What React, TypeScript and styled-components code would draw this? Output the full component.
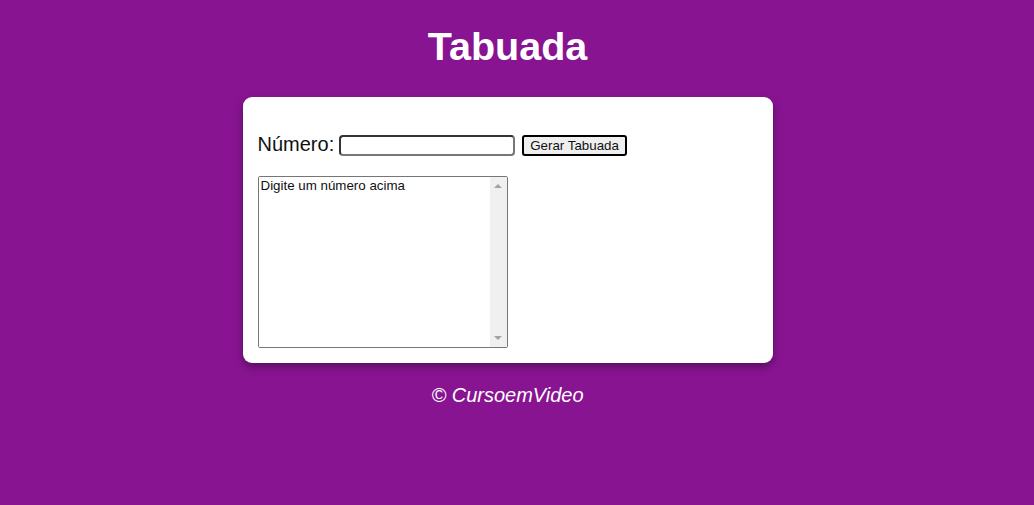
import React, { useState } from 'react';
import styled, { createGlobalStyle } from 'styled-components';

const GlobalStyle = createGlobalStyle`
  html, body {
    margin: 0;
    padding: 0;
    background: #881491;
    font-family: 'Liberation Sans', Arial, sans-serif;
  }
`;

// the reference was shot with a scrollbar gutter, so the centre sits left
const Page = styled.div`
  width: calc(100% - 19px);
  display: flex;
  flex-direction: column;
  align-items: center;
`;

const Title = styled.h1`
  margin: 24px 0 29px;
  font-size: 39.5px;
  line-height: 44px;
  font-weight: bold;
  color: #fff;
`;

const Card = styled.section`
  box-sizing: border-box;
  width: 530px;
  padding: 15px;
  background: #fff;
  border-radius: 9px;
  box-shadow: 0 4px 8px rgba(0, 0, 0, 0.35);
`;

const Row = styled.p`
  margin: 20px 0;
  font-size: 20px;
  line-height: 23px;
  color: #111;
  display: flex;
  align-items: center;
`;

const NumberInput = styled.input`
  box-sizing: border-box;
  width: 176px;
  height: 21px;
  margin: 3px 0 0 5px;
  border: 2px solid #333;
  border-bottom-color: #777;
  border-right-color: #777;
  border-radius: 4px;
  background: #fff;
  outline: none;
`;

const Button = styled.button`
  box-sizing: border-box;
  height: 21px;
  margin: 3px 0 0 7px;
  padding: 0 6px;
  font-family: 'Liberation Sans', Arial, sans-serif;
  font-size: 13.33px;
  color: #111;
  background: #efefef;
  border: 2px solid #000;
  border-radius: 3px;
  cursor: pointer;
`;

const OutputBox = styled.div`
  box-sizing: border-box;
  width: 250px;
  height: 172px;
  display: flex;
  border: 1px solid #767676;
  border-radius: 2px;
  overflow: hidden;
`;

const Output = styled.textarea`
  flex: 1;
  min-width: 0;
  margin: 0;
  padding: 1px 2px;
  font-family: 'Liberation Sans', Arial, sans-serif;
  font-size: 13.33px;
  color: #111;
  border: none;
  resize: none;
  overflow: hidden;
  outline: none;
`;

const ScrollTrack = styled.div`
  width: 17px;
  background: #f0f0f0;
  display: flex;
  flex-direction: column;
  justify-content: space-between;
  align-items: center;
  padding: 7px 0;
`;

const Arrow = styled.div<{ $down?: boolean }>`
  width: 0;
  height: 0;
  border-left: 4px solid transparent;
  border-right: 4px solid transparent;
  ${(p) => (p.$down ? 'border-top: 4px solid #a3a3a3;' : 'border-bottom: 4px solid #a3a3a3;')}
`;

const Footer = styled.p`
  margin: 21px 0 20px;
  font-size: 20px;
  line-height: 23px;
  font-style: italic;
  color: #fff;
`;

export default function App() {
  const [num, setNum] = useState('');
  const [result, setResult] = useState('Digite um número acima');

  const gerar = () => {
    const n = Number(num);
    if (num.trim() === '' || isNaN(n)) {
      setResult('Digite um número acima');
      return;
    }
    const lines: string[] = [];
    for (let i = 1; i <= 10; i++) lines.push(`${n} x ${i} = ${n * i}`);
    setResult(lines.join('\n'));
  };

  return (
    <>
      <GlobalStyle />
      <Page>
        <Title>Tabuada</Title>
        <Card>
          <Row>
            Número:
            <NumberInput type="number" value={num} onChange={(e) => setNum(e.target.value)} />
            <Button onClick={gerar}>Gerar Tabuada</Button>
          </Row>
          <OutputBox>
            <Output readOnly value={result} />
            <ScrollTrack>
              <Arrow />
              <Arrow $down />
            </ScrollTrack>
          </OutputBox>
        </Card>
        <Footer>&copy; CursoemVideo</Footer>
      </Page>
    </>
  );
}
